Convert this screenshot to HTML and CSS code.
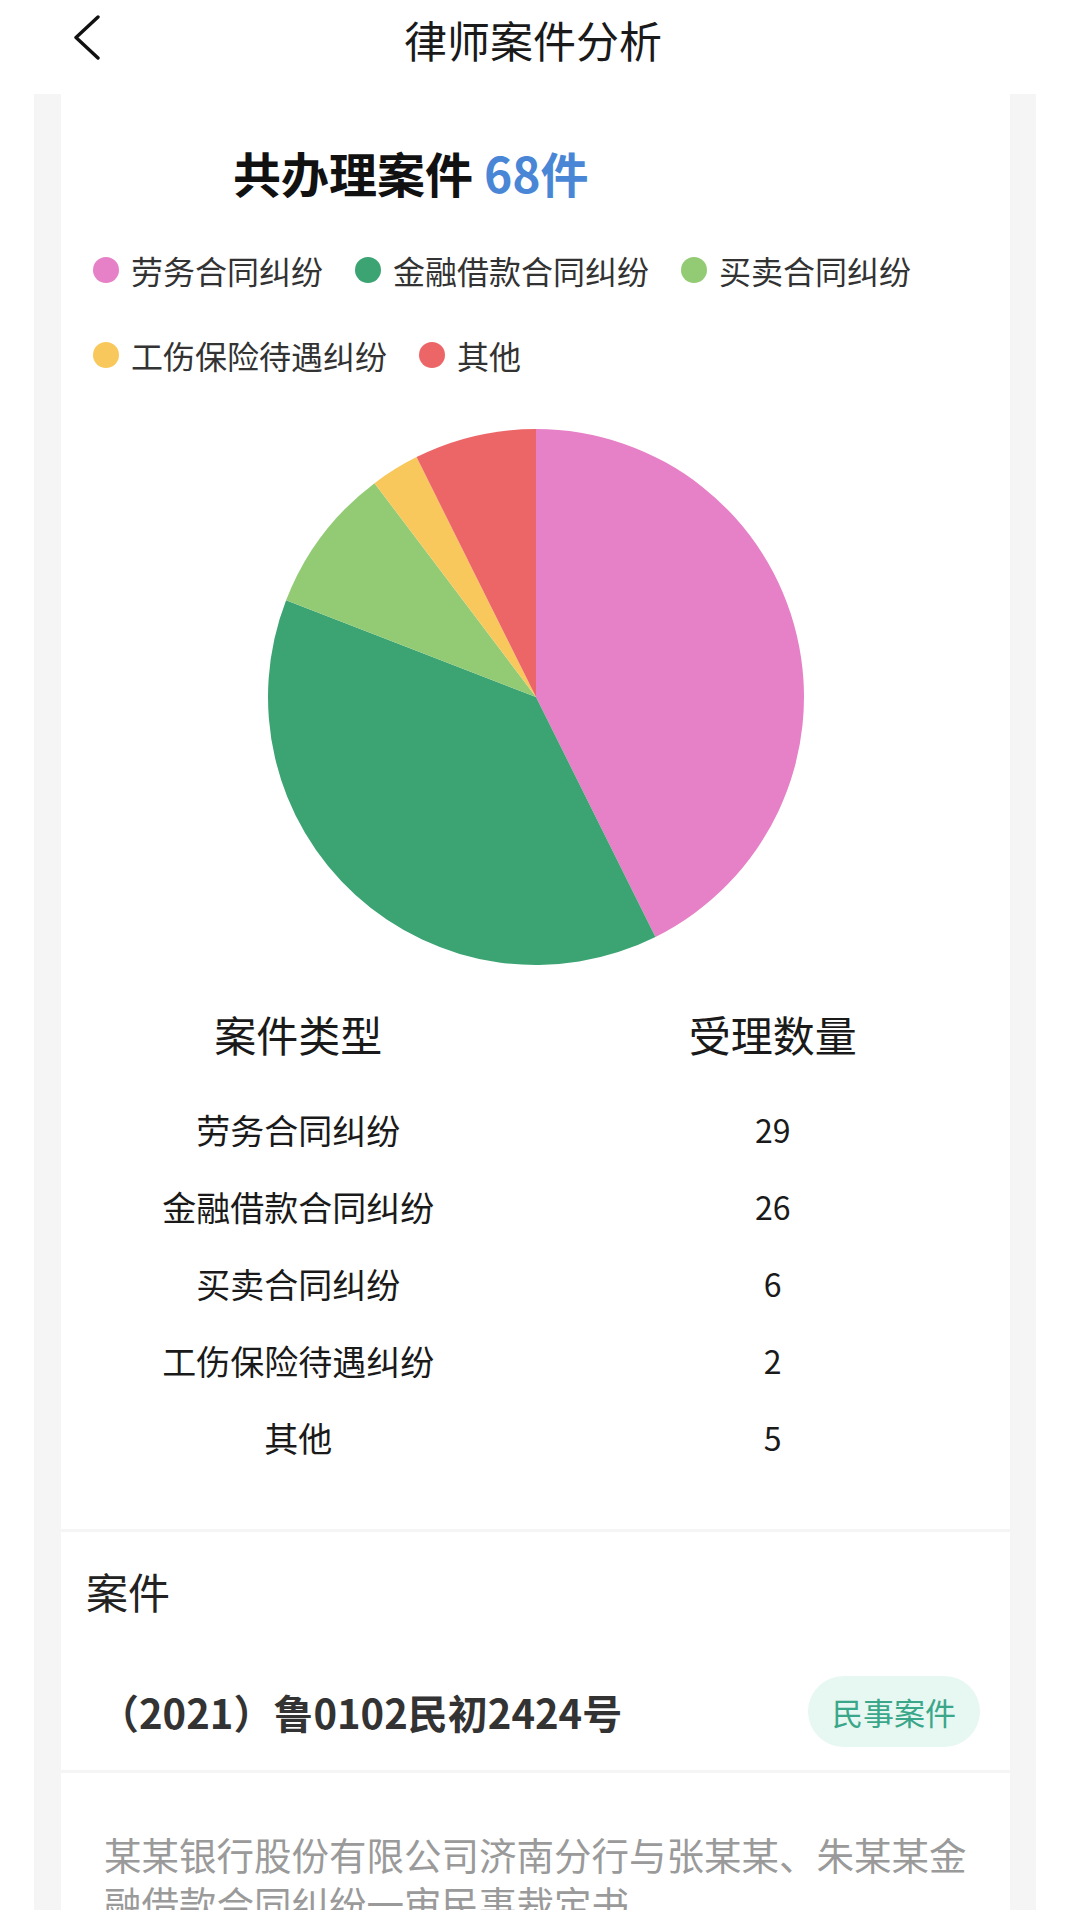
FILE: index.html
```html
<!DOCTYPE html>
<html lang="zh-CN">
<head>
<meta charset="utf-8">
<title>律师案件分析</title>
<link rel="stylesheet" href="styles.css">
</head>
<body>
<header class="nav">
  <div class="nav-left">
    <svg class="back" width="30" height="46" viewBox="0 0 30 46"><path d="M25 2 L3 22.5 L25 43" fill="none" stroke="#111" stroke-width="3.4" stroke-linecap="round" stroke-linejoin="round"/></svg>
  </div>
  <h1 class="nav-title">律师案件分析</h1>
  <div></div>
</header>

<main class="wrap">
  <section class="card chart-card">
    <h2 class="total">共办理案件 <span class="num">68件</span></h2>
    <ul class="legend">
      <li><i class="dot c1"></i>劳务合同纠纷</li>
      <li><i class="dot c2"></i>金融借款合同纠纷</li>
      <li><i class="dot c3"></i>买卖合同纠纷</li>
      <li><i class="dot c4"></i>工伤保险待遇纠纷</li>
      <li><i class="dot c5"></i>其他</li>
    </ul>
    <div class="pie-box">
      <svg class="pie" width="536" height="536" viewBox="0 0 536 536">
        <path d="M268,268 L268,0 A268,268 0 0 1 387.46,507.90 Z" fill="#e680c7"/>
        <path d="M268,268 L387.46,507.90 A268,268 0 0 1 18.10,171.19 Z" fill="#3ca373"/>
        <path d="M268,268 L18.10,171.19 A268,268 0 0 1 106.50,54.13 Z" fill="#93cb75"/>
        <path d="M268,268 L106.50,54.13 A268,268 0 0 1 148.54,28.10 Z" fill="#f8c85c"/>
        <path d="M268,268 L148.54,28.10 A268,268 0 0 1 268,0 Z" fill="#ec6567"/>
      </svg>
    </div>
    <div class="table">
      <div class="th">案件类型</div><div class="th">受理数量</div>
      <div class="td">劳务合同纠纷</div><div class="td n">29</div>
      <div class="td">金融借款合同纠纷</div><div class="td n">26</div>
      <div class="td">买卖合同纠纷</div><div class="td n">6</div>
      <div class="td">工伤保险待遇纠纷</div><div class="td n">2</div>
      <div class="td">其他</div><div class="td n">5</div>
    </div>
  </section>

  <section class="card case-card">
    <h3 class="case-head">案件</h3>
    <div class="case-row">
      <span class="case-no">（2021）鲁0102民初2424号</span>
      <span class="tag">民事案件</span>
    </div>
  </section>

  <section class="card desc-card">
    <p class="desc">某某银行股份有限公司济南分行与张某某、朱某某金融借款合同纠纷一审民事裁定书</p>
  </section>
</main>
</body>
</html>
```

FILE: styles.css
```css
* { box-sizing: border-box; }
html, body { margin: 0; padding: 0; background: #fff; }
body {
  width: 1080px;
  height: 1920px;
  overflow: hidden;
  font-family: "Noto Sans CJK SC", "Noto Sans", sans-serif;
  color: #222;
}
h1, h2, h3, p, ul { margin: 0; padding: 0; }

.nav {
  height: 78px;
  display: grid;
  grid-template-columns: 1fr auto 1fr;
  align-items: center;
}
.nav-left { padding-left: 73px; display: flex; align-items: center; }
.back { display: block; margin-top: -2px; }
.nav-title {
  font-size: 43px;
  font-weight: 400;
  color: #1a1a1a;
  line-height: 60px;
  margin-right: 14px;
}

.wrap {
  margin: 16px 0 0 34px;
  width: 1002px;
  height: 1816px;
  overflow: hidden;
  background: #f5f5f5;
  padding: 0 26px 0 27px;
  display: flex;
  flex-direction: column;
  gap: 3px;
}
.card { background: #fff; }

.chart-card { padding: 48px 32px 53px 32px; }
.total {
  padding-left: 140px;
  font-size: 48px;
  line-height: 60px;
  font-weight: 700;
  color: #111;
}
.total .num { color: #4a86d6; }

.legend {
  list-style: none;
  margin-top: 47px;
  display: flex;
  flex-wrap: wrap;
  column-gap: 32px;
  row-gap: 43px;
}
.legend li {
  display: flex;
  align-items: center;
  gap: 12px;
  height: 42px;
  font-size: 32px;
  color: #333;
}
.dot { display: block; width: 26px; height: 26px; border-radius: 50%; }
.c1 { background: #e680c7; }
.c2 { background: #3ca373; }
.c3 { background: #93cb75; }
.c4 { background: #f8c85c; }
.c5 { background: #ec6567; }

.pie-box { margin-top: 53px; display: flex; justify-content: center; }
.pie { display: block; }

.table {
  margin: 39px -32px 0 -32px;
  display: grid;
  grid-template-columns: 1fr 1fr;
  grid-template-rows: 87px;
  grid-auto-rows: 77px;
  text-align: center;
}
.th {
  align-self: start;
  font-size: 42px;
  line-height: 60px;
  height: 60px;
  color: #1a1a1a;
}
.td {
  font-size: 34px;
  line-height: 77px;
  color: #1a1a1a;
}
.td.n { font-size: 32px; }

.case-card { padding: 32px 30px 23px 0; }
.case-head {
  padding-left: 25px;
  font-size: 42px;
  font-weight: 400;
  line-height: 53px;
  color: #222;
}
.case-row {
  margin-top: 59px;
  height: 71px;
  display: flex;
  align-items: center;
  justify-content: space-between;
  padding-left: 38px;
}
.case-no {
  font-size: 40px;
  font-weight: 700;
  color: #333;
}
.tag {
  width: 172px;
  height: 71px;
  border-radius: 36px;
  background: #e7f7f1;
  color: #3aa78a;
  font-size: 31px;
  display: flex;
  align-items: center;
  justify-content: center;
}

.desc-card { flex: 1; padding: 56px 38px 0 43px; }
.desc {
  font-size: 37.5px;
  line-height: 49px;
  color: #9a9a9a;
}
```
